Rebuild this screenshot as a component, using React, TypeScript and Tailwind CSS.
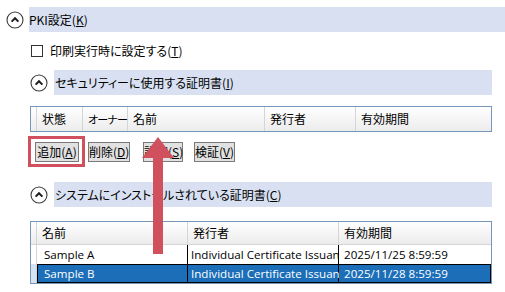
import type { ReactNode } from "react";

// PKI settings panel: collapsible sections, cert tables, annotation overlay.

const FONT = "font-['Noto_Sans_CJK_JP','Noto_Sans',sans-serif] [font-feature-settings:'palt']";

function CollapseIcon() {
  return (
    <svg width="18" height="18" viewBox="0 0 18 18" className="shrink-0">
      <circle cx="9" cy="9" r="8" fill="white" stroke="#3c3c3c" strokeWidth="1.1" />
      <path d="M5.6 10.6 L9 7.2 L12.4 10.6" fill="none" stroke="#1e1e1e" strokeWidth="2" />
    </svg>
  );
}

function SectionHeader({ children, indent }: { children: ReactNode; indent?: boolean }) {
  return (
    <div className={`flex items-center h-[25px] ${indent ? "pl-[30px] pr-[13px]" : "pl-[6px]"}`}>
      <CollapseIcon />
      <div className={`flex-1 h-full bg-[#d8e0f2] flex items-center ${indent ? "ml-[6px] pl-[1px]" : "ml-[5px]"}`}>
        {children}
      </div>
    </div>
  );
}

function Btn({ children, w }: { children: ReactNode; w: string }) {
  return (
    <button className={`${w} h-[20px] border border-[#7a7a7a] bg-[#e1e1e1] text-[12px] leading-none text-black whitespace-nowrap`}>
      {children}
    </button>
  );
}

const HEAD_CELL = "h-full shrink-0 flex items-center pl-[5px] border-r border-[#d5d5d5] whitespace-nowrap";

export default function App() {
  return (
    <div className={`relative w-[505px] h-[292px] bg-white text-[12px] text-black ${FONT} pt-[7px]`}>
      <SectionHeader>
        <span>
          PKI設定(<u>K</u>)
        </span>
      </SectionHeader>

      <div className="flex items-center h-[25px] mt-[6px] pl-[31px]">
        <span className="w-[12px] h-[12px] border border-[#333] bg-white" />
        <span className="ml-[7px]">
          印刷実行時に設定する(<u>T</u>)
        </span>
      </div>

      <div className="mt-[7px]">
        <SectionHeader indent>
          <span>
            セキュリティーに使用する証明書(<u>I</u>)
          </span>
        </SectionHeader>
      </div>

      {/* security certificates table (empty) */}
      <div className="mt-[11px] ml-[30px] mr-[13px] h-[26px] border border-[#7897b8] flex bg-gradient-to-b from-white to-[#ececec]">
        <div className="w-[6px] shrink-0 h-full border-r border-[#d5d5d5]" />
        <div className={`${HEAD_CELL} w-[46px]`}>状態</div>
        <div className={`${HEAD_CELL} w-[45px] text-[11px] tracking-[-0.8px]`}>オーナー</div>
        <div className={`${HEAD_CELL} w-[137px]`}>名前</div>
        <div className={`${HEAD_CELL} w-[91px]`}>発行者</div>
        <div className="h-full flex items-center pl-[5px] flex-1">有効期間</div>
      </div>

      <div className="flex items-center mt-[10px] pl-[35px]">
        <div className="relative">
          <Btn w="w-[44px]">
            追加(<u>A</u>)
          </Btn>
          <div className="absolute -left-[7px] -top-[6px] -right-[6px] -bottom-[5px] border-[3px] border-[#d0505e]" />
        </div>
        <div className="ml-[9px]">
          <Btn w="w-[42px]">
            削除(<u>D</u>)
          </Btn>
        </div>
        <div className="ml-[13px]">
          <Btn w="w-[40px]">
            詳細(<u>S</u>)
          </Btn>
        </div>
        <div className="ml-[11px]">
          <Btn w="w-[41px]">
            検証(<u>V</u>)
          </Btn>
        </div>
      </div>

      <div className="mt-[20px]">
        <SectionHeader indent>
          <span>
            システムにインストールされている証明書(<u>C</u>)
          </span>
        </SectionHeader>
      </div>

      {/* installed certificates table */}
      <div className="mt-[14px] ml-[30px] mr-[13px] border border-[#7897b8] font-['Open_Sans',sans-serif] [font-feature-settings:normal]">
        <div className="h-[23px] flex bg-gradient-to-b from-white to-[#ececec] border-b border-[#d5d5d5] font-['Noto_Sans_CJK_JP',sans-serif]">
          <div className="w-[6px] shrink-0 h-full border-r border-[#d5d5d5]" />
          <div className={`${HEAD_CELL} w-[151px]`}>名前</div>
          <div className={`${HEAD_CELL} w-[151px]`}>発行者</div>
          <div className="h-full flex items-center pl-[5px] flex-1">有効期間</div>
        </div>
        <div className="h-[19px] flex text-[11.6px]">
          <div className="w-[6px] shrink-0 h-full border-r border-[#d5d5d5]" />
          <div className="w-[151px] shrink-0 h-full flex items-center pl-[7px] border-r border-black">Sample A</div>
          <div className="w-[151px] shrink-0 h-full flex items-center pl-[3px] border-r border-black whitespace-nowrap">
            Individual Certificate Issuan
          </div>
          <div className="flex-1 h-full flex items-center pl-[5px]">2025/11/25 8:59:59</div>
        </div>
        <div className="h-[19px] flex text-[11.6px] text-white">
          <div className="w-[6px] shrink-0 h-full border-r border-[#d5d5d5] bg-[#d4e4f5]" />
          <div className="w-[151px] shrink-0 h-full flex items-center pl-[6px] border border-black bg-[#1b6eb7]">Sample B</div>
          <div className="w-[151px] shrink-0 h-full flex items-center pl-[3px] border-y border-r border-black bg-[#1b6eb7] whitespace-nowrap">
            Individual Certificate Issuan
          </div>
          <div className="flex-1 h-full flex items-center pl-[5px] border-y border-r border-black bg-[#1b6eb7]">
            2025/11/28 8:59:59
          </div>
        </div>
      </div>

      {/* annotation arrow */}
      <svg className="absolute left-0 top-0 pointer-events-none" width="505" height="292">
        <polygon
          points="158,137 174,158 163,158 163,254 153,254 153,158 142,158"
          fill="#d0505e"
        />
      </svg>
    </div>
  );
}
